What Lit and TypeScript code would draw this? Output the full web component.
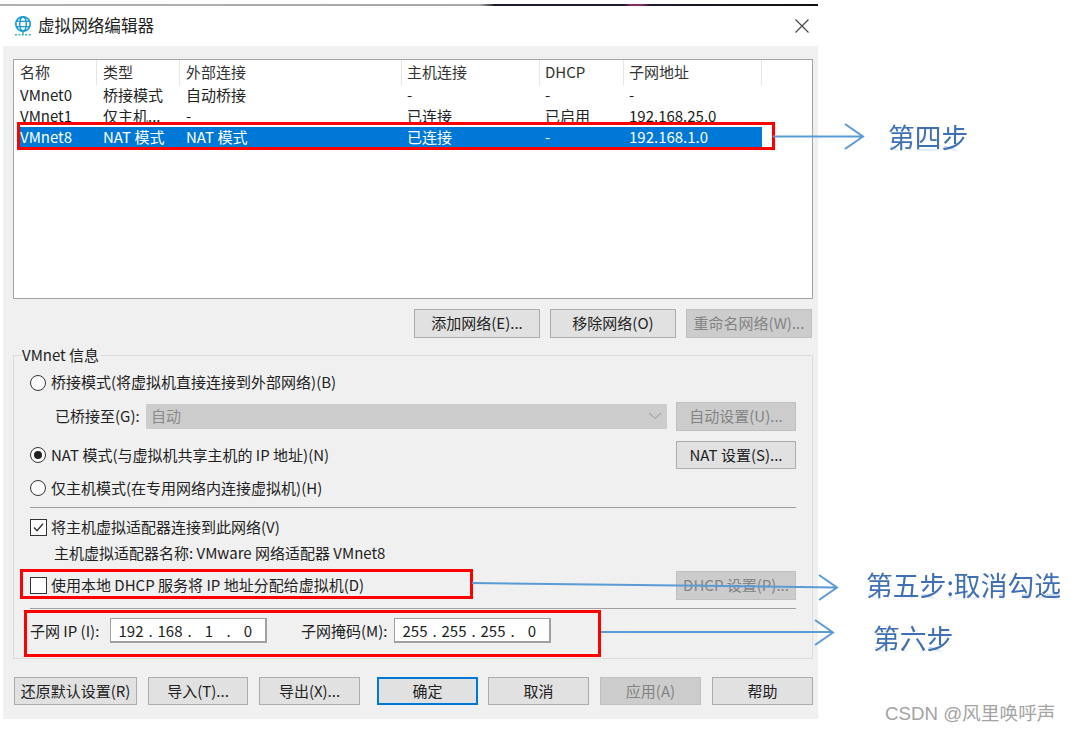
import { LitElement, html, css } from "lit";
import { customElement } from "lit/decorators.js";

@customElement("app-root")
export class AppRoot extends LitElement {
  static styles = css`
    :host { display: block; position: relative; width: 1071px; height: 733px; background: #fff; overflow: hidden; font-family: "Noto Sans CJK SC", "Noto Sans", sans-serif; font-size: 15px; color: #222; }
    * { box-sizing: border-box; }
    .strip { margin-top: 4px; width: 818px; height: 2px; background: linear-gradient(90deg, #b0b0b0 0, #a8a8a8 480px, #1c1c2c 495px, #1c1c2c 625px, #8a2a5a 630px, #8a2a5a 642px, #1c1c2c 650px, #111 818px); }
    .dialog { margin-left: 3px; width: 815px; }
    .title { height: 40px; display: flex; align-items: center; padding-left: 11px; padding-right: 8px; font-size: 16.6px; color: #222; }
    .title span { margin-left: 6px; flex: 1; line-height: 38px; height: 40px; }
    .body { background: #f0f0f0; padding: 13px 5px 14px 10px; }
    .list { height: 240px; background: #fff; border: 1px solid #a3a3a8; }
    .row { display: grid; grid-template-columns: 83px 83px 222px 138px 84px 138px; height: 20.5px; line-height: 18px; width: 748px; }
    .row > div { padding-left: 6px; white-space: nowrap; }
    .row > div:nth-child(n+4) { padding-left: 5px; }
    .head { height: 25px; line-height: 23px; margin-bottom: 1px; color: #333; }
    .head > div { border-right: 1px solid #e6e6e6; }
    .sel { background: #0078d7; color: #fff; margin-left: 4px; width: 744px; line-height: 19px; grid-template-columns: 79px 83px 222px 138px 84px 138px; }
    .sel > div:first-child { padding-left: 2px; }
    .btns { display: flex; justify-content: flex-end; gap: 10px; margin-top: 10px; padding-right: 1px; }
    .btn { height: 29px; display: flex; align-items: center; justify-content: center; padding-bottom: 2px; background: #e1e1e1; border: 1px solid #adadad; white-space: nowrap; color: #222; }
    .btn.off { background: #cccccc; border-color: #bfbfbf; color: #838383; }
    .btn.def { border: 2px solid #0078d7; }
    .w126 { width: 126px; }
    .w120 { width: 120px; }
    .group { position: relative; margin-top: 17px; height: 304px; border: 1px solid #dcdcdc; padding: 17px 16px 0; }
    .legend { position: absolute; left: 8px; top: -11px; padding-right: 2px; background: #f0f0f0; line-height: 20px; }
    .line { display: flex; align-items: center; height: 20px; }
    .line.tall { height: 29px; }
    .line.nat { height: 28px; }
    .nat .btn { height: 28px; }
    .between { justify-content: space-between; }
    .opt { display: flex; align-items: center; padding-bottom: 3px; }
    .low .opt { padding-bottom: 1px; }
    .radio { width: 16px; height: 16px; border: 1px solid #333; border-radius: 50%; background: #fff; margin: 3px 5px 0 0; display: flex; align-items: center; justify-content: center; flex: none; }
    .radio i { width: 8px; height: 8px; border-radius: 50%; background: #222; }
    .check { width: 17px; height: 17px; border: 1px solid #333; background: #fff; margin: 3px 4px 0 0; flex: none; display: flex; }
    .low .radio, .low .check { margin-top: 1px; }
    .mt9 { margin-top: 9px; }
    .mt10 { margin-top: 10px; }
    .mt6 { margin-top: 6px; }
    .mt8 { margin-top: 8px; }
    .bridge-label { width: 116px; padding-left: 25px; white-space: nowrap; padding-bottom: 2px; }
    .select { flex: 1; height: 25px; background: #cccccc; color: #8a8a8a; padding: 0 5px 2px; margin-right: 9px; display: flex; align-items: center; justify-content: space-between; }
    .sep { height: 1px; background: #a0a0a0; }
    .indent { padding-left: 24px; padding-bottom: 2px; }
    .subnet { display: flex; align-items: center; height: 25px; }
    .ip-label { width: 80px; white-space: nowrap; padding-bottom: 1px; }
    .mask-label { width: 93px; margin-left: 34px; white-space: nowrap; padding-bottom: 1px; }
    .ip { width: 157px; height: 25px; background: #fff; border: 1px solid #a0a0a0; border-bottom-width: 2px; border-right-width: 2px; display: flex; align-items: center; padding-left: 5px; }
    .ip b { font-weight: 400; width: 30px; text-align: center; }
    .ip u { text-decoration: none; width: 9px; text-align: center; }
    .foot { display: flex; margin-top: 18px; margin-left: 1px; }
    .foot .btn { height: 28px; }
    .b123 { width: 123px; }
    .b100 { width: 100px; margin-left: 11px; }
    .b101 { width: 101px; margin-left: 11px; }
    .b-ok { width: 101px; margin-left: 17px; }
    .b-cancel { width: 101px; margin-left: 10px; }
    .mark { position: absolute; border: 3px solid #ff0000; pointer-events: none; }
    .m1 { left: 17px; top: 122px; width: 758px; height: 28px; }
    .m2 { left: 20px; top: 569px; width: 453px; height: 30px; }
    .m3 { left: 24px; top: 610px; width: 577px; height: 47px; }
    .arrows { position: absolute; left: 0; top: 0; }
    .call { position: absolute; font-size: 26.8px; line-height: 32px; color: #3f6fb4; white-space: nowrap; -webkit-box-reflect: below -10px linear-gradient(transparent 70%, rgba(255,255,255,0.45)); }
    .c1 { left: 888px; top: 121px; }
    .c2 { left: 866px; top: 569px; }
    .c3 { left: 873px; top: 622px; }
    .wm { position: absolute; left: 885px; top: 702px; font-size: 18.7px; line-height: 24px; color: #a3a3a3; white-space: nowrap; font-family: "Liberation Sans", "Noto Sans CJK SC", sans-serif; }
  `;

  private ip(parts: string[]) {
    return html`<div class="ip">
      <b>${parts[0]}</b><u>.</u><b>${parts[1]}</b><u>.</u><b>${parts[2]}</b><u>.</u><b>${parts[3]}</b>
    </div>`;
  }

  render() {
    const rows = [
      ["VMnet0", "桥接模式", "自动桥接", "-", "-", "-"],
      ["VMnet1", "仅主机...", "-", "已连接", "已启用", "192.168.25.0"],
    ];
    return html`
      <div class="strip"></div>
      <div class="dialog">
        <div class="title">
          <svg width="18" height="20" viewBox="0 0 18 20">
            <circle cx="9" cy="8" r="7.2" fill="#fff" stroke="#1b9ad6" stroke-width="1.7"/>
            <ellipse cx="9" cy="8" rx="3.3" ry="7.2" fill="none" stroke="#1b9ad6" stroke-width="1.4"/>
            <path d="M2 5.4h14M2 10.6h14" stroke="#1b9ad6" stroke-width="1.4" fill="none"/>
            <path d="M9 15.5v2.5" stroke="#35b5a5" stroke-width="1.5"/>
            <path d="M1 18.8h16" stroke="#35b5a5" stroke-width="1.4" stroke-dasharray="2 1.4"/>
          </svg>
          <span>虚拟网络编辑器</span>
          <svg width="16" height="16" viewBox="0 0 16 16"><path d="M1.5 1.5l13 13M14.5 1.5l-13 13" stroke="#444" stroke-width="1.1" fill="none"/></svg>
        </div>
        <div class="body">
          <div class="list">
            <div class="row head">
              <div>名称</div><div>类型</div><div>外部连接</div><div>主机连接</div><div>DHCP</div><div>子网地址</div>
            </div>
            ${rows.map((r) => html`<div class="row">${r.map((c) => html`<div>${c}</div>`)}</div>`)}
            <div class="row sel">
              <div>VMnet8</div><div>NAT 模式</div><div>NAT 模式</div><div>已连接</div><div>-</div><div>192.168.1.0</div>
            </div>
          </div>
          <div class="btns">
            <div class="btn w126">添加网络(E)...</div>
            <div class="btn w126">移除网络(O)</div>
            <div class="btn w126 off">重命名网络(W)...</div>
          </div>
          <div class="group">
            <div class="legend">VMnet 信息</div>
            <div class="line"><div class="opt"><div class="radio"></div>桥接模式(将虚拟机直接连接到外部网络)(B)</div></div>
            <div class="line tall mt9">
              <div class="bridge-label">已桥接至(G):</div>
              <div class="select">自动
                <svg width="14" height="8" viewBox="0 0 14 8"><path d="M1 1l6 5.5L13 1" stroke="#a8a8a8" stroke-width="1.1" fill="none"/></svg>
              </div>
              <div class="btn w120 off">自动设置(U)...</div>
            </div>
            <div class="line nat low mt10 between">
              <div class="opt"><div class="radio"><i></i></div>NAT 模式(与虚拟机共享主机的 IP 地址)(N)</div>
              <div class="btn w120">NAT 设置(S)...</div>
            </div>
            <div class="line low mt9"><div class="opt"><div class="radio"></div>仅主机模式(在专用网络内连接虚拟机)(H)</div></div>
            <div class="sep mt9"></div>
            <div class="line low mt9"><div class="opt"><div class="check"><svg width="15" height="15" viewBox="0 0 15 15"><path d="M3 7.5l3 3.2L12 3.8" stroke="#333" stroke-width="1.4" fill="none"/></svg></div>将主机虚拟适配器连接到此网络(V)</div></div>
            <div class="line mt6 indent">主机虚拟适配器名称: VMware 网络适配器 VMnet8</div>
            <div class="line tall mt8 between">
              <div class="opt"><div class="check"></div>使用本地 DHCP 服务将 IP 地址分配给虚拟机(D)</div>
              <div class="btn w120 off">DHCP 设置(P)...</div>
            </div>
            <div class="sep mt8"></div>
            <div class="subnet mt9">
              <div class="ip-label">子网 IP (I):</div>
              ${this.ip(["192", "168", "1", "0"])}
              <div class="mask-label">子网掩码(M):</div>
              ${this.ip(["255", "255", "255", "0"])}
            </div>
          </div>
          <div class="foot">
            <div class="btn b123">还原默认设置(R)</div>
            <div class="btn b100">导入(T)...</div>
            <div class="btn b101">导出(X)...</div>
            <div class="btn def b-ok">确定</div>
            <div class="btn b-cancel">取消</div>
            <div class="btn off b101">应用(A)</div>
            <div class="btn b101">帮助</div>
          </div>
        </div>
      </div>
      <div class="mark m1"></div>
      <div class="mark m2"></div>
      <div class="mark m3"></div>
      <svg class="arrows" width="1071" height="733" viewBox="0 0 1071 733" fill="none" stroke="#5b9bd5" stroke-width="2">
        <path d="M773 136.5H862M845 124l18 12.5-18 12.5"/>
        <path d="M472 583L836 587.5M819 575l18 12.5-18 12.5"/>
        <path d="M601 632H832M815 620l18 12.5-18 12.5"/>
      </svg>
      <div class="call c1">第四步</div>
      <div class="call c2">第五步:取消勾选</div>
      <div class="call c3">第六步</div>
      <div class="wm">CSDN @风里唤呼声</div>
    `;
  }
}
